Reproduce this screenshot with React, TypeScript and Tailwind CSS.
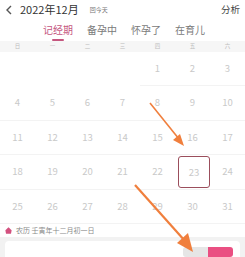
import React from 'react';

const weekDays = ['日', '一', '二', '三', '四', '五', '六'];

// December 2022 starts on Thursday
const cells: (number | null)[] = [
  null, null, null, null, 1, 2, 3,
  ...Array.from({ length: 28 }, (_, i) => i + 4),
];

const tabs = ['记经期', '备孕中', '怀孕了', '在育儿'];

export default function App() {
  return (
    <div className="relative w-[245px] h-[257px] overflow-hidden bg-white flex flex-col font-['Noto_Sans_CJK_SC','Noto_Sans',sans-serif]">
      {/* header */}
      <div className="h-[22px] flex items-center pl-[5px] pr-[5px]">
        <svg width="8" height="10" viewBox="0 0 8 10" className="shrink-0">
          <path d="M6 1 L2 5 L6 9" fill="none" stroke="#555" strokeWidth="1.4" />
        </svg>
        <span className="ml-[7px] text-[11px] leading-none text-[#333]">2022年12月</span>
        <span className="ml-[11px] text-[6px] leading-none text-[#777]">回今天</span>
        <span className="ml-auto text-[9.5px] leading-none text-[#444]">分析</span>
      </div>

      {/* tabs */}
      <div className="h-[23px] flex items-center pl-[43px] gap-[14px] text-[10px] leading-none">
        {tabs.map((tab, i) => (
          <div key={tab} className="relative h-full flex items-center">
            <span className={i === 0 ? 'text-[#c5577f]' : 'text-[#7a7a7a]'}>{tab}</span>
            {i === 0 && (
              <span className="absolute left-[9px] top-[19px] w-[12px] h-[2px] rounded-full bg-[#c5577f]" />
            )}
          </div>
        ))}
      </div>

      {/* week header */}
      <div className="h-[12px] grid grid-cols-7 bg-[#f6f6f6]">
        {weekDays.map((d) => (
          <div key={d} className="flex items-center justify-center text-[5.5px] leading-none text-[#bdbdbd]">
            {d}
          </div>
        ))}
      </div>

      {/* calendar */}
      <div className="grid grid-cols-7">
        {cells.map((n, i) => (
          <div
            key={i}
            className={`h-[34.5px] flex items-center justify-center ${n ? 'border-b border-[#f3f3f3]' : ''}`}
          >
            {n === 23 ? (
              <div className="w-[34px] h-[32px] ml-[3px] rounded-[3px] border-[1.5px] border-[#9b4e5c] flex items-center justify-center text-[9.5px] text-[#c9c9c9]">
                {n}
              </div>
            ) : (
              <span className="text-[9.5px] leading-none text-[#c9c9c9]">{n ?? ''}</span>
            )}
          </div>
        ))}
      </div>

      {/* lunar */}
      <div className="h-[14px] flex items-center pl-[5px] gap-[4px]">
        <svg width="7" height="7" viewBox="0 0 10 10">
          <path d="M5 0.5 L9.5 4.5 L8.5 9.5 L1.5 9.5 L0.5 4.5 Z" fill="#d3517f" />
        </svg>
        <span className="text-[7px] leading-none text-[#8a8a8a]">农历 壬寅年十二月初一日</span>
      </div>

      {/* bottom */}
      <div className="flex-1 bg-[#f2f2f2] px-[5px] pt-[4px]">
        <div className="h-full bg-white rounded-t-[4px] flex justify-end pr-[7px] pt-[6px]">
          <div className="w-[25px] h-[10px] bg-[#e6e6e6] rounded-l-[3px]" />
          <div className="w-[25px] h-[10px] bg-[#ea4f82] rounded-r-[3px]" />
        </div>
      </div>

      {/* annotation arrows */}
      <svg className="absolute inset-0 pointer-events-none" width="245" height="257" viewBox="0 0 245 257">
        <line x1="150" y1="103" x2="179" y2="139" stroke="#f07f3d" strokeWidth="1.6" />
        <polygon points="184,146 173,140 180,134" fill="#f07f3d" />
        <line x1="135" y1="185" x2="185" y2="241" stroke="#f07f3d" strokeWidth="2.2" />
        <polygon points="193,252 177,243 188,233" fill="#f07f3d" />
      </svg>
    </div>
  );
}
